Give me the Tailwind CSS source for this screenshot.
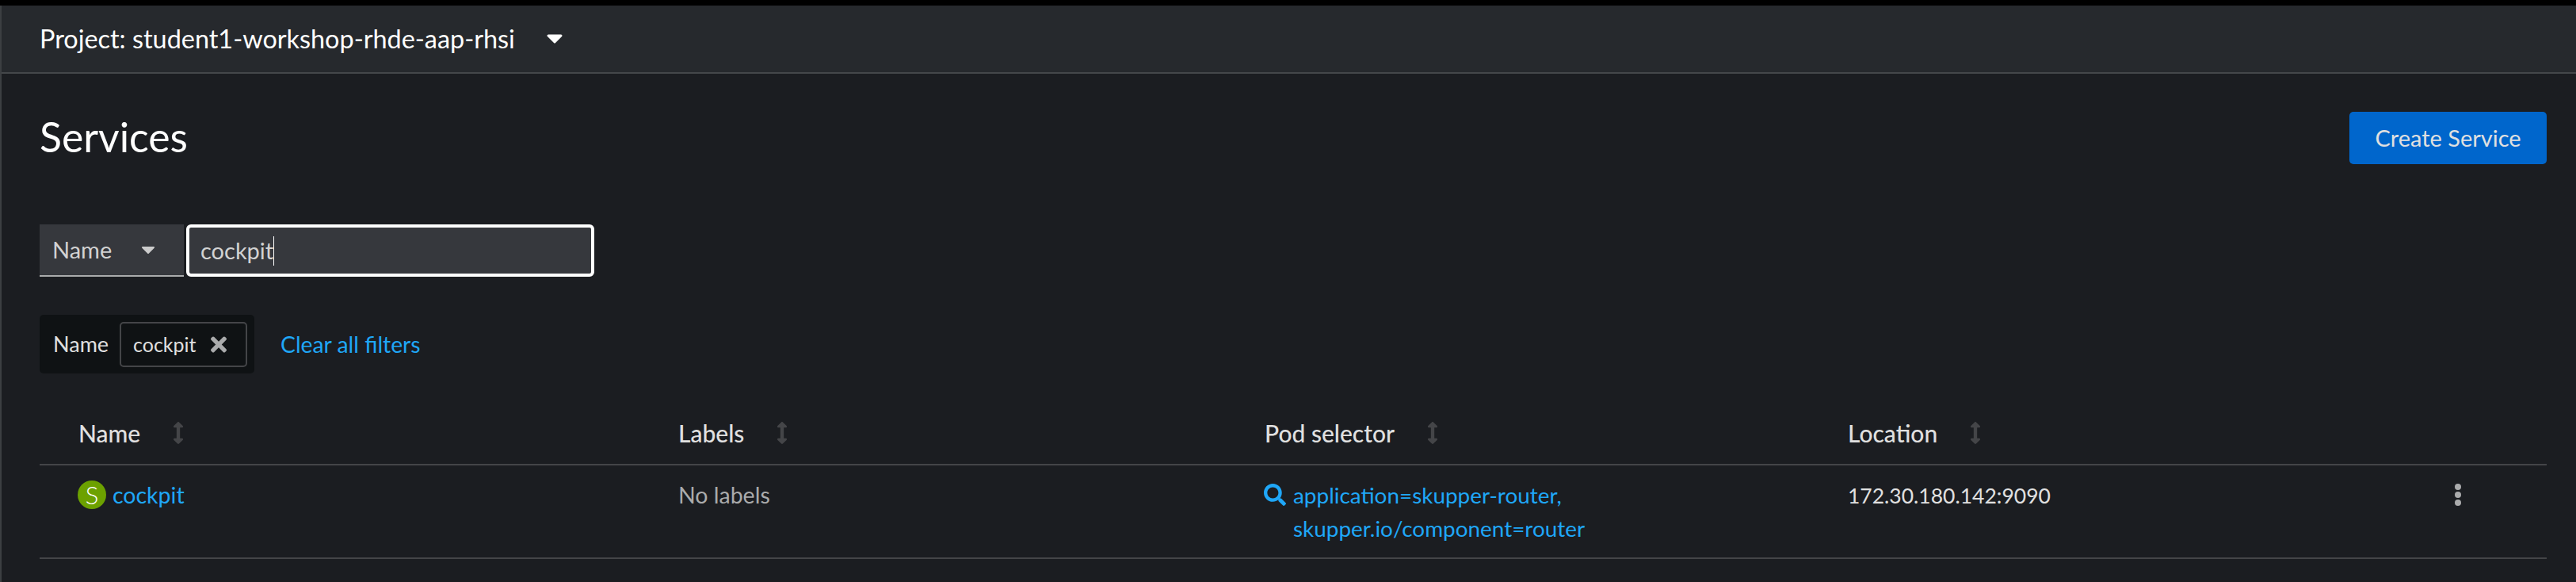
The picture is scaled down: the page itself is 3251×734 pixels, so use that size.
<!DOCTYPE html>
<html>
  <head>
    <meta charset="UTF-8" />
    <script src="https://cdn.jsdelivr.net/npm/@tailwindcss/browser@4"></script>
    <title>Services</title>
  </head>
  <body class="overflow-hidden bg-black font-['Lato',sans-serif] text-[28.5px] leading-[42px] text-[#e0e0e0]">
    <div class="flex flex-col w-screen h-screen pt-[7px]">
      <div class="flex-1 flex flex-col border-l-2 border-[#3c3f42] bg-[#1b1d21]">

        <!-- project bar -->
        <div class="flex items-center shrink-0 h-[86px] pl-[48px] gap-[38px] bg-[#26292d] border-b-2 border-[#44474a] text-white">
          <span class="w-[601px] whitespace-nowrap text-[32.4px]">Project: student1-workshop-rhde-aap-rhsi</span>
          <svg width="22" height="12" viewBox="0 0 22 12"><polygon points="3,2 19,2 11,10" fill="#fff" stroke="#fff" stroke-width="3" stroke-linejoin="round"/></svg>
        </div>

        <div class="flex-1 flex flex-col pl-[48px] pr-[37px]">
          <!-- title -->
          <div class="flex items-center justify-between h-[66px] mt-[48px]">
            <h1 class="text-[51.7px] leading-[63px] text-white -mt-[4px]">Services</h1>
            <button class="w-[249px] h-[66px] rounded-[5px] bg-[#0066cc] text-[#e0e0e0] text-[29px]">Create Service</button>
          </div>

          <!-- filter -->
          <div class="flex items-stretch h-[66px] mt-[76px] text-[#d2d2d2] text-[29px]">
            <div class="flex items-center w-[182px] pl-[16px] gap-[39px] bg-[#36383d] border-b-2 border-[#aaabac]">
              <span class="w-[73px]">Name</span>
              <svg width="18" height="11" viewBox="0 0 18 11"><polygon points="2,2 16,2 9,9" fill="#ccc" stroke="#ccc" stroke-width="2" stroke-linejoin="round"/></svg>
            </div>
            <div class="flex items-center w-[515px] ml-[3px] pl-[14px] bg-[#36383d] border-4 border-white rounded-[6px]">
              <span>cockpit</span><span class="w-px h-[37px] bg-white"></span>
            </div>
          </div>

          <!-- chips -->
          <div class="flex items-center mt-[48px] h-[74px]">
            <div class="flex items-center h-full w-[271px] pl-[17px] gap-[17px] rounded-[5px] bg-[#0f1214] text-[27px]">
              <span class="w-[67px]">Name</span>
              <div class="flex items-center w-[161px] h-[57px] pl-[15px] gap-[20px] border-2 border-[#444548] rounded-[5px] text-[25px]">
                <span class="w-[78px]">cockpit</span>
                <svg width="20" height="29" viewBox="0 0 352 512" fill="#aaabac"><path d="M242.72 256l100.07-100.07c12.28-12.28 12.28-32.19 0-44.48l-22.24-22.24c-12.28-12.28-32.19-12.28-44.48 0L176 189.28 75.93 89.21c-12.28-12.28-32.19-12.28-44.48 0L9.21 111.45c-12.28 12.28-12.28 32.19 0 44.48L109.28 256 9.21 356.07c-12.28 12.28-12.28 32.19 0 44.48l22.24 22.24c12.28 12.28 32.2 12.28 44.48 0L176 322.72l100.07 100.07c12.28 12.28 32.2 12.28 44.48 0l22.24-22.24c12.28-12.28 12.28-32.19 0-44.48L242.72 256z"/></svg>
              </div>
            </div>
            <a class="ml-[33px] text-[#1fa7f8] text-[28.3px]">Clear all filters</a>
          </div>

          <!-- table head -->
          <div class="grid grid-cols-[806px_740px_736px_1fr] items-center h-[78px] mt-[38px] pb-[2px] border-b-2 border-[#444548] text-[30px] font-medium">
            <div class="flex items-center pl-[49px] gap-[41px]">
              <span>Name</span>
              <svg width="14" height="28" viewBox="0 0 256 512" fill="#444548"><path d="M214.059 377.941H168V134.059h46.059c21.382 0 32.09-25.851 16.971-40.971L144.971 7.029c-9.373-9.373-24.568-9.373-33.941 0L24.971 93.088c-15.119 15.119-4.411 40.971 16.971 40.971H88v243.882H41.941c-21.382 0-32.09 25.851-16.971 40.971l86.059 86.059c9.373 9.373 24.568 9.373 33.941 0l86.059-86.059c15.12-15.119 4.412-40.971-16.97-40.971z"/></svg>
            </div>
            <div class="flex items-center gap-[41px]">
              <span>Labels</span>
              <svg width="14" height="28" viewBox="0 0 256 512" fill="#444548"><path d="M214.059 377.941H168V134.059h46.059c21.382 0 32.09-25.851 16.971-40.971L144.971 7.029c-9.373-9.373-24.568-9.373-33.941 0L24.971 93.088c-15.119 15.119-4.411 40.971 16.971 40.971H88v243.882H41.941c-21.382 0-32.09 25.851-16.971 40.971l86.059 86.059c9.373 9.373 24.568 9.373 33.941 0l86.059-86.059c15.12-15.119 4.412-40.971-16.97-40.971z"/></svg>
            </div>
            <div class="flex items-center gap-[41px]">
              <span>Pod selector</span>
              <svg width="14" height="28" viewBox="0 0 256 512" fill="#444548"><path d="M214.059 377.941H168V134.059h46.059c21.382 0 32.09-25.851 16.971-40.971L144.971 7.029c-9.373-9.373-24.568-9.373-33.941 0L24.971 93.088c-15.119 15.119-4.411 40.971 16.971 40.971H88v243.882H41.941c-21.382 0-32.09 25.851-16.971 40.971l86.059 86.059c9.373 9.373 24.568 9.373 33.941 0l86.059-86.059c15.12-15.119 4.412-40.971-16.97-40.971z"/></svg>
            </div>
            <div class="flex items-center gap-[41px]">
              <span>Location</span>
              <svg width="14" height="28" viewBox="0 0 256 512" fill="#444548"><path d="M214.059 377.941H168V134.059h46.059c21.382 0 32.09-25.851 16.971-40.971L144.971 7.029c-9.373-9.373-24.568-9.373-33.941 0L24.971 93.088c-15.119 15.119-4.411 40.971 16.971 40.971H88v243.882H41.941c-21.382 0-32.09 25.851-16.971 40.971l86.059 86.059c9.373 9.373 24.568 9.373 33.941 0l86.059-86.059c15.12-15.119 4.412-40.971-16.97-40.971z"/></svg>
            </div>
          </div>

          <!-- table row -->
          <div class="grid grid-cols-[806px_740px_736px_1fr] h-[118px] pt-[16px] border-b-2 border-[#444548]">
            <div class="flex items-start pl-[48px] gap-[8px]">
              <span class="flex items-center justify-center w-[36px] h-[36px] mt-[3px] rounded-full bg-[#6ca100] text-white text-[31px] font-light leading-none">S</span>
              <a class="text-[#1fa7f8]">cockpit</a>
            </div>
            <div class="text-[#aaabac]">No labels</div>
            <div class="flex items-start gap-[9px] -ml-[1px] text-[#1fa7f8] text-[27.9px]">
              <svg class="mt-[7px] shrink-0" width="28" height="28" viewBox="0 0 512 512" fill="#1fa7f8"><path d="M505 442.7L405.3 343c-4.5-4.5-10.6-7-17-7H372c27.6-35.3 44-79.7 44-128C416 93.1 322.9 0 208 0S0 93.1 0 208s93.1 208 208 208c48.3 0 92.7-16.4 128-44v16.3c0 6.4 2.5 12.5 7 17l99.7 99.7c9.4 9.4 24.6 9.4 33.9 0l28.3-28.3c9.4-9.4 9.4-24.6.1-34zM208 336c-70.7 0-128-57.2-128-128 0-70.7 57.2-128 128-128 70.7 0 128 57.2 128 128 0 70.7-57.2 128-128 128z"/></svg>
              <div>application=skupper-router,<br>skupper.io/component=router</div>
            </div>
            <div class="relative">
              <span class="text-[26.5px]">172.30.180.142:9090</span>
              <div class="absolute right-[108px] top-[7px] flex flex-col gap-[2px]">
                <span class="w-[8px] h-[8px] rounded-full bg-[#aaabac]"></span>
                <span class="w-[8px] h-[8px] rounded-full bg-[#aaabac]"></span>
                <span class="w-[8px] h-[8px] rounded-full bg-[#aaabac]"></span>
              </div>
            </div>
          </div>
        </div>
      </div>
    </div>
  </body>
</html>
